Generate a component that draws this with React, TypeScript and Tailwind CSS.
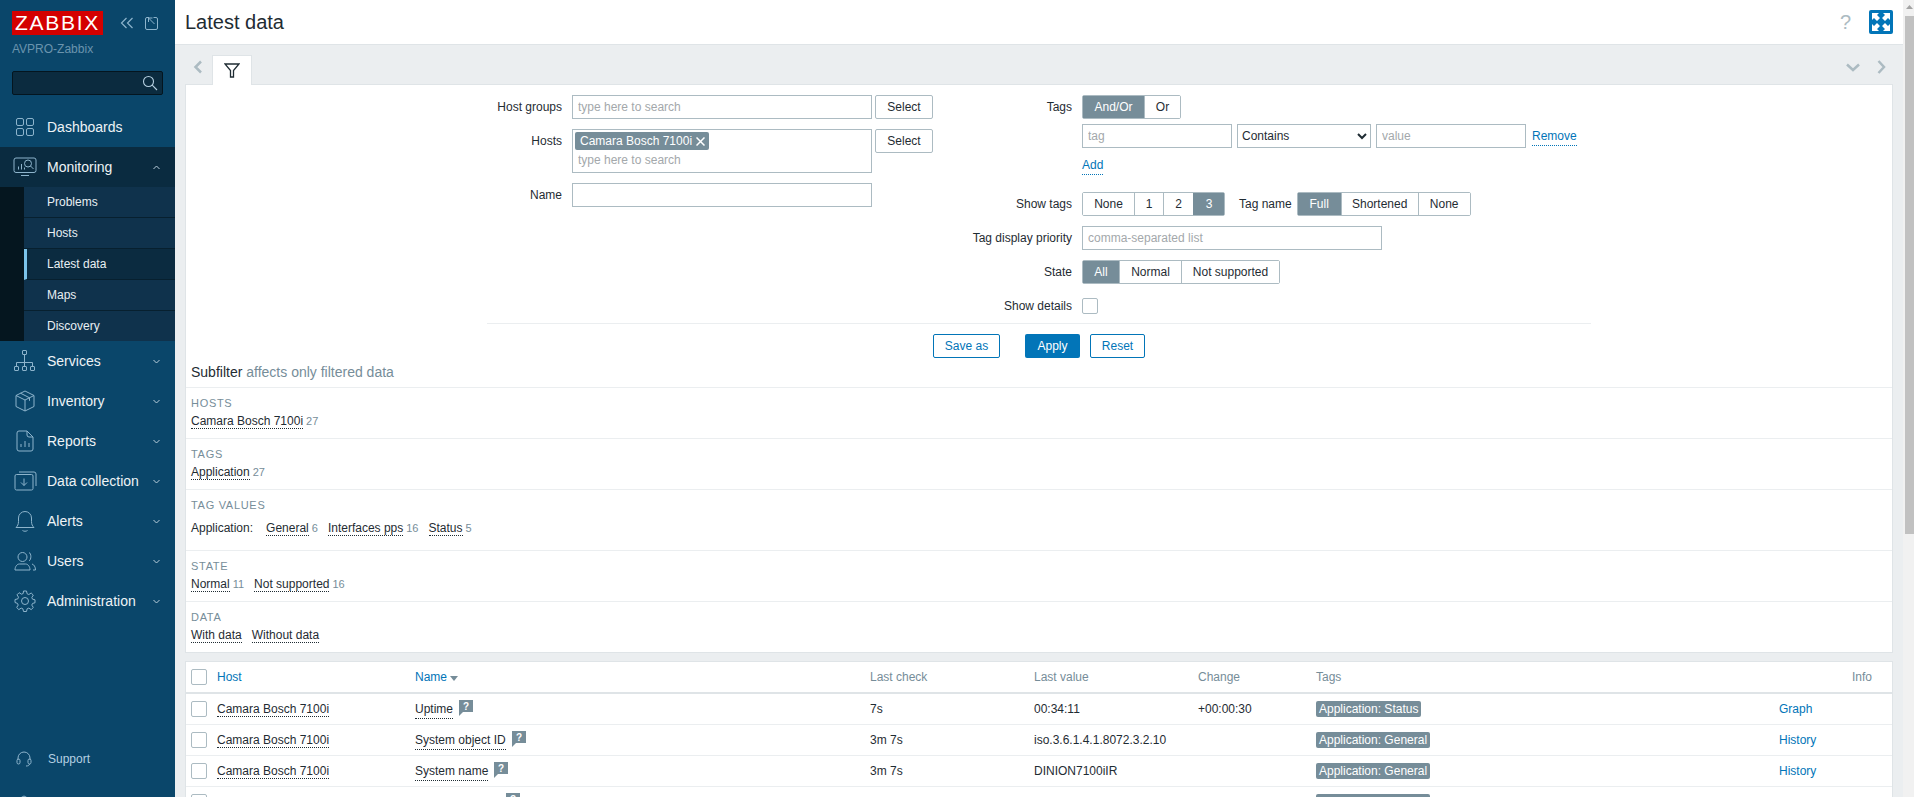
import type { ReactNode } from "react";

const iconClass = "fill-none stroke-current";

function DashboardsIcon() {
  return (
    <svg width="20" height="20" viewBox="0 0 20 20" className={iconClass}>
      <rect x="1.500" y="1.500" width="7" height="7" rx="1.500" />
      <rect x="11.500" y="1.500" width="7" height="7" rx="1.500" />
      <rect x="1.500" y="11.500" width="7" height="7" rx="1.500" />
      <rect x="11.500" y="11.500" width="7" height="7" rx="1.500" />
    </svg>
  );
}

function MonitoringIcon() {
  return (
    <svg width="24" height="20" viewBox="0 0 24 20" className={iconClass}>
      <path d="M8 15.500H3a2 2 0 0 1-2-2V3a2 2 0 0 1 2-2h18a2 2 0 0 1 2 2v10.500a2 2 0 0 1-2 2H8z" />
      <path d="M8 18.500h8" />
      <path d="M5.500 12.500V9.500M8.500 12.500V7M11.500 12.500v-2" />
      <circle cx="15" cy="6.500" r="3.500" />
      <path d="M17.500 9l3 3" />
    </svg>
  );
}

function ServicesIcon() {
  return (
    <svg width="22" height="22" viewBox="0 0 22 22" className={iconClass}>
      <rect x="8.500" y="0.500" width="4" height="4" rx="0.500" />
      <rect x="0.500" y="16.500" width="4" height="4" rx="0.500" />
      <rect x="8.500" y="16.500" width="4" height="4" rx="0.500" />
      <rect x="16.500" y="16.500" width="4" height="4" rx="0.500" />
      <path d="M10.500 4.500v12M2.500 16.500v-4h16v4" />
    </svg>
  );
}

function InventoryIcon() {
  return (
    <svg width="20" height="22" viewBox="0 0 20 22" className={iconClass}>
      <path d="M10 1l9 4.500v11L10 21l-9-4.500v-11L10 1z" />
      <path d="M1 5.500L10 10l9-4.500M10 10v11M5.500 3.200l9 4.600v3" />
    </svg>
  );
}

function ReportsIcon() {
  return (
    <svg width="18" height="22" viewBox="0 0 18 22" className={iconClass}>
      <path d="M3 1h8l6 6v12a2 2 0 0 1-2 2H3a2 2 0 0 1-2-2V3a2 2 0 0 1 2-2z" />
      <path d="M11 1v4a2 2 0 0 0 2 2h4M5 17v-3M9 17v-6M13 17v-4" />
    </svg>
  );
}

function DataCollectionIcon() {
  return (
    <svg width="23" height="20" viewBox="0 0 23 20" className={iconClass}>
      <rect x="1" y="3.500" width="18" height="15.500" rx="1.500" />
      <path d="M5 1h15a2 2 0 0 1 2 2v12" />
      <path d="M10 7.500v7M7 11.500l3 3 3-3" />
    </svg>
  );
}

function AlertsIcon() {
  return (
    <svg width="20" height="22" viewBox="0 0 20 22" className={iconClass}>
      <path d="M1 17.500h18c-1.500-1.500-2.500-3-2.500-6V8a6.500 6.500 0 0 0-13 0v3.500c0 3-1 4.500-2.500 6z" />
      <path d="M7.500 20.500c1.500 1 3.500 1 5 0" />
    </svg>
  );
}

function UsersIcon() {
  return (
    <svg width="22" height="20" viewBox="0 0 22 20" className={iconClass}>
      <circle cx="8.500" cy="6" r="4.500" />
      <path d="M1 19c0-3.500 2-6 4.500-6h6c2.500 0 4.500 2.500 4.500 6H1z" />
      <path d="M15 1.500c2.500 1 2.500 7 0 8.500M18 13c2 .5 3.500 3 3.500 6H19" />
    </svg>
  );
}

function AdministrationIcon() {
  return (
    <svg width="22" height="22" viewBox="0 0 22 22" className={iconClass}>
      <circle cx="11" cy="11" r="3.500" />
      <path d="M9.500 1h3l.6 2.800 1.700.7 2.400-1.500 2.100 2.100-1.500 2.400.7 1.700 2.500.6v3l-2.500.6-.7 1.700 1.500 2.400-2.100 2.100-2.400-1.500-1.700.7-.6 2.700h-3l-.6-2.700-1.700-.7-2.400 1.500-2.100-2.100 1.500-2.400-.7-1.700L1 12.500v-3l2.800-.6.7-1.700L3 4.800l2.100-2.100 2.400 1.500 1.700-.7.300-2.500z" />
    </svg>
  );
}

function SupportIcon() {
  return (
    <svg width="16" height="16" viewBox="0 0 16 16" className={iconClass}>
      <path d="M2 9V7a6 6 0 0 1 12 0v2" />
      <rect x="1" y="8" width="3" height="5" rx="1.500" />
      <rect x="12" y="8" width="3" height="5" rx="1.500" />
      <path d="M13.500 13c0 1.500-1.500 2-3.500 2" />
    </svg>
  );
}

function IntegrationsIcon() {
  return (
    <svg width="16" height="16" viewBox="0 0 16 16" className={iconClass}>
      <path d="M8 1l6.500 3.500v7L8 15l-6.500-3.500v-7L8 1z" />
      <path d="M8 5v6M5 8h6" />
    </svg>
  );
}

function Chevron({ up = false }: { up?: boolean }) {
  return (
    <svg width="7" height="5" viewBox="0 0 7 5" className="fill-none stroke-[#b9cedb]">
      <path d={up ? "M.5 4L3.500 1l3 3" : "M.5 1l3 3 3-3"} />
    </svg>
  );
}

const navTop = [
  { label: "Services", icon: <ServicesIcon /> },
  { label: "Inventory", icon: <InventoryIcon /> },
  { label: "Reports", icon: <ReportsIcon /> },
  { label: "Data collection", icon: <DataCollectionIcon /> },
  { label: "Alerts", icon: <AlertsIcon /> },
  { label: "Users", icon: <UsersIcon /> },
  { label: "Administration", icon: <AdministrationIcon /> },
];

const monitoringItems = ["Problems", "Hosts", "Latest data", "Maps", "Discovery"];

function NavRow({ label, icon, open, active }: { label: string; icon: ReactNode; open?: boolean; active?: boolean }) {
  return (
    <div className={`flex h-[40px] items-center pr-[15px] text-[14px] text-[#eef3f6] ${active ? "bg-[#0a2b40]" : ""}`}>
      <div className="flex w-[47px] shrink-0 items-center justify-center pl-[3px] text-[#8db4cc]">{icon}</div>
      <span className="flex-1">{label}</span>
      {open !== undefined && <Chevron up={open} />}
    </div>
  );
}

function Sidebar() {
  return (
    <aside className="flex h-full w-[175px] shrink-0 flex-col bg-[#0a466a] *:shrink-0">
      <div className="flex items-center pl-[12px] pt-[11px]">
        <div className="flex h-[24px] w-[91px] items-center justify-center bg-[#d40000] text-[21px] tracking-[1.7px] text-white">
          ZABBIX
        </div>
        <svg width="14" height="12" viewBox="0 0 14 12" className="ml-[17px] fill-none stroke-[#8db4cc] stroke-[1.2]">
          <path d="M6.500 1L1.500 6l5 5M12.500 1l-5 5 5 5" />
        </svg>
        <svg width="13" height="13" viewBox="0 0 13 13" className="ml-[11px] fill-none stroke-[#8db4cc]">
          <path d="M4 .5H2A1.500 1.500 0 0 0 .5 2v9A1.500 1.500 0 0 0 2 12.500h9a1.500 1.500 0 0 0 1.500-1.500V2A1.500 1.500 0 0 0 11 .5H8.500" />
          <path d="M3.500 1l6 6M3.500 5V1h4" />
        </svg>
      </div>
      <div className="pl-[12px] pt-[6px] text-[12px] leading-[16px] text-[#6b94ae]">AVPRO-Zabbix</div>
      <div className="ml-[12px] mt-[14px] flex h-[24px] w-[151px] items-center justify-end rounded-[2px] border border-[#04151f] bg-[#0b2b3f] pr-[4px]">
        <svg width="16" height="16" viewBox="0 0 16 16" className="fill-none stroke-[#b5cfe0] stroke-[1.1]">
          <circle cx="6.500" cy="6.500" r="5" />
          <path d="M10.200 10.200L15 15" />
        </svg>
      </div>
      <nav className="mt-[12px]">
        <NavRow label="Dashboards" icon={<DashboardsIcon />} />
        <NavRow label="Monitoring" icon={<MonitoringIcon />} open active />
        <ul className="border-l-[24px] border-[#05161f]">
          {monitoringItems.map((item, i) => (
            <li
              key={item}
              className={`flex items-center pl-[23px] text-[12px] text-[#e8eff3] ${
                i < monitoringItems.length - 1 ? "h-[31px] border-b border-[#07202f]" : "h-[30px]"
              } ${item === "Latest data" ? "border-l-[3px] bg-[#0b2b40] !pl-[20px] [border-left-color:#7cc4ea]" : "bg-[#0f324c]"}`}
            >
              {item}
            </li>
          ))}
        </ul>
        {navTop.map((n) => (
          <NavRow key={n.label} label={n.label} icon={n.icon} open={false} />
        ))}
      </nav>
      <div className="mt-[120px] flex h-[36px] items-center text-[12px] text-[#b5d0e2]">
        <div className="flex w-[48px] justify-center text-[#8db4cc]"><SupportIcon /></div>
        Support
      </div>
      <div className="mt-[8px] flex h-[36px] items-center text-[12px] text-[#b5d0e2]">
        <div className="flex w-[48px] justify-center text-[#8db4cc]"><IntegrationsIcon /></div>
        Integrations
      </div>
    </aside>
  );
}

const fieldClass =
  "h-[24px] border border-[#acbbc2] bg-white px-[5px] text-[12px] text-[#1f2c33] outline-none placeholder:text-[#a3a8ab]";

function Label({ children, className = "w-[386px]" }: { children: ReactNode; className?: string }) {
  return <div className={`${className} shrink-0 pr-[10px] text-right leading-[24px]`}>{children}</div>;
}

function SelectButton() {
  return (
    <button className="ml-[3px] h-[24px] w-[58px] rounded-[2px] border border-[#acbbc2] bg-white text-[12px] text-[#1f2c33]">
      Select
    </button>
  );
}

function Segmented({ options, active, widths }: { options: string[]; active: string; widths: string[] }) {
  return (
    <div className="flex h-[24px] rounded-[2px] border border-[#acbbc2]">
      {options.map((o, i) => (
        <div
          key={o}
          className={`flex items-center justify-center ${widths[i]} ${i > 0 ? "border-l border-[#acbbc2]" : ""} ${
            o === active ? "!border-[#768d99] bg-[#768d99] text-white" : "bg-white"
          }`}
        >
          {o}
        </div>
      ))}
    </div>
  );
}

function FilterForm() {
  return (
    <div className="flex pt-[10px]">
      <div className="flex w-[776px] shrink-0 flex-col gap-[10px]">
        <div className="flex">
          <Label>Host groups</Label>
          <input className={`${fieldClass} w-[300px]`} placeholder="type here to search" />
          <SelectButton />
        </div>
        <div className="flex">
          <Label>Hosts</Label>
          <div className="h-[44px] w-[300px] border border-[#acbbc2] px-[2px] pt-[2px]">
            <div className="inline-flex h-[18px] items-center gap-[4px] rounded-[2px] bg-[#768d99] pl-[5px] pr-[4px] text-white">
              Camara Bosch 7100i
              <svg width="9" height="9" viewBox="0 0 9 9" className="fill-none stroke-white stroke-[1.5]">
                <path d="M.5.5l8 8M8.500.5l-8 8" />
              </svg>
            </div>
            <input className="block h-[20px] w-full px-[3px] text-[12px] outline-none placeholder:text-[#a3a8ab]" placeholder="type here to search" />
          </div>
          <SelectButton />
        </div>
        <div className="flex">
          <Label>Name</Label>
          <input className={`${fieldClass} w-[300px]`} />
        </div>
      </div>
      <div className="flex flex-col">
        <div className="flex">
          <Label className="w-[120px]">Tags</Label>
          <Segmented options={["And/Or", "Or"]} active="And/Or" widths={["w-[61px]", "w-[36px]"]} />
        </div>
        <div className="mt-[5px] flex items-center pl-[120px]">
          <input className={`${fieldClass} w-[150px]`} placeholder="tag" />
          <select defaultValue="Contains" className="ml-[5px] h-[24px] w-[134px] border border-[#acbbc2] bg-white text-[12px] text-[#1f2c33]">
            <option>Contains</option>
          </select>
          <input className={`${fieldClass} ml-[5px] w-[150px]`} placeholder="value" />
          <a className="ml-[6px] border-b border-dotted border-[#0275b8] text-[#0275b8]">Remove</a>
        </div>
        <div className="flex h-[34px] items-center pl-[120px]">
          <a className="border-b border-dotted border-[#0275b8] text-[#0275b8]">Add</a>
        </div>
        <div className="mt-[10px] flex">
          <Label className="w-[120px]">Show tags</Label>
          <Segmented options={["None", "1", "2", "3"]} active="3" widths={["w-[51px]", "w-[29px]", "w-[30px]", "w-[31px]"]} />
          <div className="ml-[14px] mr-[5px] leading-[24px]">Tag name</div>
          <Segmented options={["Full", "Shortened", "None"]} active="Full" widths={["w-[43px]", "w-[77px]", "w-[52px]"]} />
        </div>
        <div className="mt-[10px] flex">
          <Label className="w-[120px]">Tag display priority</Label>
          <input className={`${fieldClass} w-[300px]`} placeholder="comma-separated list" />
        </div>
        <div className="mt-[10px] flex">
          <Label className="w-[120px]">State</Label>
          <Segmented options={["All", "Normal", "Not supported"]} active="All" widths={["w-[36px]", "w-[62px]", "w-[98px]"]} />
        </div>
        <div className="mt-[10px] flex h-[24px] items-center">
          <Label className="w-[120px]">Show details</Label>
          <div className="h-[16px] w-[16px] rounded-[2px] border border-[#acbbc2] bg-white" />
        </div>
      </div>
    </div>
  );
}

function SubLink({ label, count }: { label: string; count?: number }) {
  return (
    <span className="mr-[10px] inline-block">
      <a className="border-b border-dotted border-[#1f2c33]">{label}</a>
      {count !== undefined && <span className="ml-[3px] text-[11px] text-[#768d99]">{count}</span>}
    </span>
  );
}

function SubRow({ title, children, tall }: { title: string; children: ReactNode; tall?: boolean }) {
  return (
    <div className={`border-t-[1px] border-[#ebeef0] px-[5px] pt-[8px] ${tall ? "pb-[15px]" : "pb-[10px]"}`}>
      <div className="text-[11px] leading-[14px] tracking-[0.7px] text-[#768d99]">{title}</div>
      <div className={`leading-[14px] ${tall ? "mt-[9px]" : "mt-[4px]"}`}>{children}</div>
    </div>
  );
}

function HelpIcon() {
  return (
    <svg width="14" height="16" viewBox="0 0 14 16" className="-mt-[2px] ml-[6px] shrink-0">
      <path d="M0 0h14v12H4l-4 4z" fill="#768d99" />
      <text x="7" y="10" textAnchor="middle" fontSize="10" fontWeight="700" fill="#fff">?</text>
    </svg>
  );
}

const rows = [
  { check: "7s", name: "Uptime", value: "00:34:11", change: "+00:00:30", tag: "Application: Status", action: "Graph" },
  { check: "3m 7s", name: "System object ID", value: "iso.3.6.1.4.1.8072.3.2.10", change: "", tag: "Application: General", action: "History" },
  { check: "3m 7s", name: "System name", value: "DINION7100iIR", change: "", tag: "Application: General", action: "History" },
  { check: "3m 7s", name: "System location", value: "", change: "", tag: "Application: General", action: "History" },
];

function Checkbox() {
  return <div className="h-[16px] w-[16px] rounded-[2px] border border-[#acbbc2] bg-white" />;
}

function DataTable() {
  return (
    <table className="mt-[8px] w-full table-fixed border-separate border-spacing-0 border border-[#dfe4e7] bg-white">
      <colgroup>
        <col className="w-[31px]" />
        <col className="w-[198px]" />
        <col className="w-[455px]" />
        <col className="w-[164px]" />
        <col className="w-[164px]" />
        <col className="w-[118px]" />
        <col className="w-[463px]" />
        <col className="w-[73px]" />
        <col />
      </colgroup>
      <thead>
        <tr className="h-[32px] text-left font-normal text-[#768d99]">
          <th className="border-b-2 border-[#dfe4e7] pl-[5px] font-normal"><Checkbox /></th>
          <th className="border-b-2 border-[#dfe4e7] font-normal text-[#0275b8]">Host</th>
          <th className="border-b-2 border-[#dfe4e7] font-normal text-[#0275b8]">
            Name
            <span className="ml-[3px] inline-block h-0 w-0 border-x-[4px] border-t-[5px] border-x-transparent border-t-[#768d99]" />
          </th>
          <th className="border-b-2 border-[#dfe4e7] font-normal">Last check</th>
          <th className="border-b-2 border-[#dfe4e7] font-normal">Last value</th>
          <th className="border-b-2 border-[#dfe4e7] font-normal">Change</th>
          <th className="border-b-2 border-[#dfe4e7] font-normal">Tags</th>
          <th className="border-b-2 border-[#dfe4e7]" />
          <th className="border-b-2 border-[#dfe4e7] font-normal">Info</th>
        </tr>
      </thead>
      <tbody>
        {rows.map((r) => (
          <tr key={r.name} className="h-[31px]">
            <td className="border-b border-[#ebeef0] pl-[5px]"><Checkbox /></td>
            <td className="border-b border-[#ebeef0]">
              <a className="border-b border-dotted border-[#1f2c33]">Camara Bosch 7100i</a>
            </td>
            <td className="border-b border-[#ebeef0]">
              <div className="flex items-center">
                <a className="border-b border-dotted border-[#1f2c33]">{r.name}</a>
                <HelpIcon />
              </div>
            </td>
            <td className="border-b border-[#ebeef0]">{r.check}</td>
            <td className="border-b border-[#ebeef0]">{r.value}</td>
            <td className="border-b border-[#ebeef0]">{r.change}</td>
            <td className="border-b border-[#ebeef0]">
              <span className="inline-block h-[16px] rounded-[2px] bg-[#768d99] px-[3px] leading-[16px] text-white">{r.tag}</span>
            </td>
            <td className="border-b border-[#ebeef0] text-[#0275b8]">{r.action}</td>
            <td className="border-b border-[#ebeef0]" />
          </tr>
        ))}
      </tbody>
    </table>
  );
}

export default function App() {
  return (
    <div className="flex h-[797px] overflow-hidden bg-[#ebeef0] text-[12px] text-[#1f2c33] [font-family:'Liberation_Sans',Arial,sans-serif]">
      <Sidebar />
      <main className="min-w-0 flex-1">
        <header className="flex h-[45px] items-center border-b border-[#dfe4e7] bg-white px-[10px]">
          <h1 className="text-[20px] text-[#1f2c33]">Latest data</h1>
          <span className="ml-auto text-[20px] text-[#acbbc2]">?</span>
          <div className="ml-[18px] flex h-[24px] w-[24px] items-center justify-center rounded-[2px] bg-[#0275b8]">
            <svg width="18" height="18" viewBox="0 0 18 18" fill="#fff">
              <path d="M0 0h7L5 2l3 3-3 3-3-3-2 2zM18 0v7l-2-2-3 3-3-3 3-3-2-2zM0 18v-7l2 2 3-3 3 3-3 3 2 2zM18 18h-7l2-2-3-3 3-3 3 3 2-2z" />
            </svg>
          </div>
        </header>
        <div className="px-[10px] pt-[10px]">
          <div className="flex h-[30px] items-start">
            <div className="flex h-[24px] w-[27px] items-center pl-[8px]">
              <svg width="10" height="14" viewBox="0 0 10 14" className="fill-none stroke-[#acbbc2] stroke-[2.5]">
                <path d="M8 1.500L2.500 7 8 12.500" />
              </svg>
            </div>
            <div className="relative z-10 flex h-[30px] w-[40px] items-center justify-center border-x border-t border-[#dfe4e7] bg-white">
              <svg width="16" height="15" viewBox="0 0 16 15" className="fill-none stroke-[#1f2c33] stroke-[1.3]">
                <path d="M1 1h14L9.500 7.500V14h-3V7.500L1 1z" />
              </svg>
            </div>
            <div className="ml-auto flex h-[24px] items-center gap-[17px] pr-[7px]">
              <svg width="14" height="9" viewBox="0 0 14 9" className="fill-none stroke-[#acbbc2] stroke-[2.5]">
                <path d="M1 1.500l6 5.500 6-5.500" />
              </svg>
              <svg width="9" height="14" viewBox="0 0 9 14" className="fill-none stroke-[#acbbc2] stroke-[2.5]">
                <path d="M1.500 1l5.500 6-5.500 6" />
              </svg>
            </div>
          </div>
          <section className="-mt-px border border-[#dfe4e7] bg-white">
            <FilterForm />
            <div className="ml-[301px] mt-[5px] w-[1104px] border-t border-[#ebeef0]" />
            <div className="flex pl-[747px] pt-[10px]">
              <button className="h-[24px] w-[67px] rounded-[2px] border border-[#0275b8] bg-white text-[12px] text-[#0275b8]">Save as</button>
              <button className="ml-[25px] h-[24px] w-[55px] rounded-[2px] bg-[#0275b8] text-[12px] text-white">Apply</button>
              <button className="ml-[10px] h-[24px] w-[55px] rounded-[2px] border border-[#0275b8] bg-white text-[12px] text-[#0275b8]">Reset</button>
            </div>
            <div className="mb-[7px] mt-[6px] px-[5px] text-[14px] leading-[16px]">
              Subfilter <span className="text-[#768d99]">affects only filtered data</span>
            </div>
            <SubRow title="HOSTS"><SubLink label="Camara Bosch 7100i" count={27} /></SubRow>
            <SubRow title="TAGS"><SubLink label="Application" count={27} /></SubRow>
            <SubRow title="TAG VALUES" tall>
              <span className="mr-[13px]">Application:</span>
              <SubLink label="General" count={6} />
              <SubLink label="Interfaces pps" count={16} />
              <SubLink label="Status" count={5} />
            </SubRow>
            <SubRow title="STATE">
              <SubLink label="Normal" count={11} />
              <SubLink label="Not supported" count={16} />
            </SubRow>
            <SubRow title="DATA">
              <SubLink label="With data" />
              <SubLink label="Without data" />
            </SubRow>
          </section>
          <DataTable />
        </div>
      </main>
      <div className="flex w-[11px] shrink-0 flex-col bg-[#f1f1f1] pl-[2px]">
        <svg width="9" height="16" viewBox="0 0 9 16" className="shrink-0 fill-[#a3a3a3]">
          <path d="M4.500 5L8 9H1z" />
        </svg>
        <div className="h-[518px] bg-[#c1c1c1]" />
      </div>
    </div>
  );
}
